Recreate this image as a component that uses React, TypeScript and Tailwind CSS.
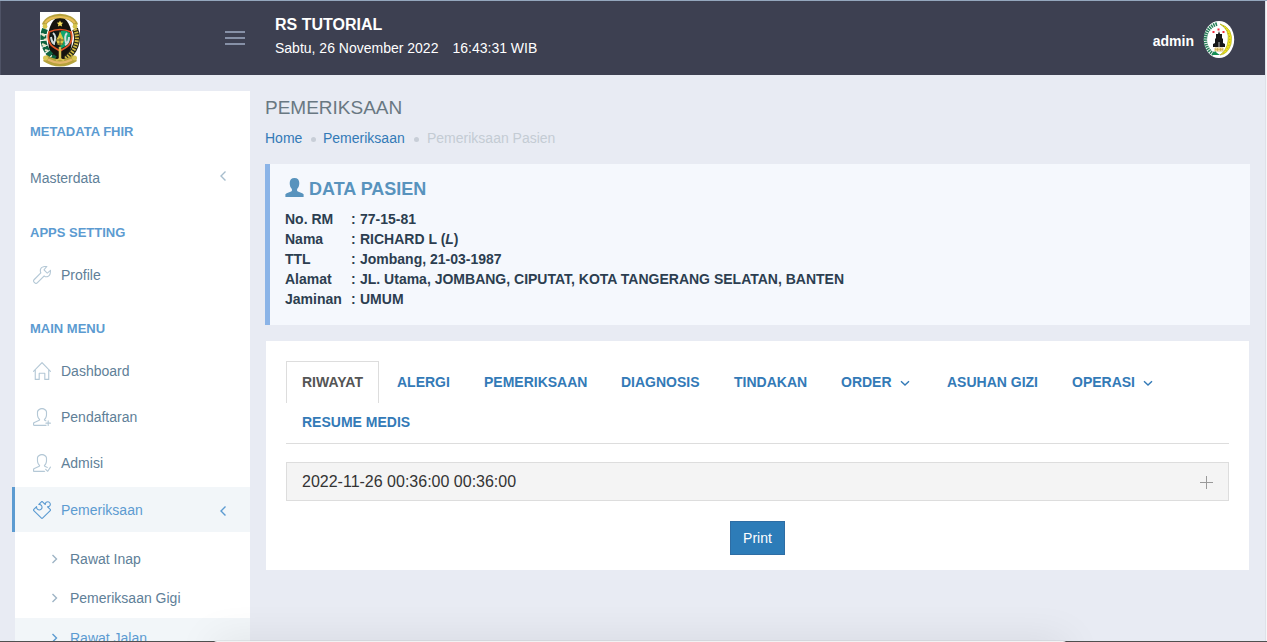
import React from "react";
import { SlHome, SlPuzzle, SlUserFollow, SlUserFollowing, SlWrench } from "react-icons/sl";

function CityCrest() {
  return (
    <svg width="40" height="55" viewBox="0 0 40 55" className="block bg-white">
      <ellipse cx="20" cy="27" rx="12" ry="22" fill="#15130f" />
      <path d="M4 13C9 1 31 1 36 13" fill="none" stroke="#b5a23e" strokeWidth="4.5" />
      <path d="M5 11C11 3 29 3 35 11" fill="none" stroke="#e7bd55" strokeWidth="2" />
      <circle cx="5" cy="14.500" r="2.400" fill="#d6c54c" />
      <circle cx="35" cy="14.500" r="2.400" fill="#d6c54c" />
      <path d="M5 17C1 27 4 39 15 47" fill="none" stroke="#0d6340" strokeWidth="6" strokeDasharray="5 1" />
      <path d="M2 22l3 2M2 32l4 2M5 38l3 1M4 28l3-1" stroke="#e8e7c9" strokeWidth="2.300" />
      <path d="M35 17C40 28 35 40 25 47" fill="none" stroke="#242516" strokeWidth="6" />
      <path d="M35 17C40 28 35 40 25 47" fill="none" stroke="#d3bd45" strokeWidth="4" strokeDasharray="1.7 1.2" />
      <path d="m20 8.500 1 2 2.200.2-1.600 1.500.5 2.300-2.100-1.100-2.100 1.100.5-2.300-1.600-1.500 2.200-.2z" fill="#f7e05f" />
      <path d="M9 20Q20 15 31 20Q34 31 25 36L20 39L15 36Q6 31 9 20Z" fill="#111816" stroke="#e25527" strokeWidth="1.700" />
      <path d="M21 19Q26 18 30 21Q32 31 24 35L20 37Z" fill="#10a46d" />
      <path d="M13 21Q17 24 14 31M11 25Q12 32 15 32M27 21Q24 24 26 31M29 25Q29 31 25 33" stroke="#d2dddd" strokeWidth="2" fill="none" />
      <path d="M20 19Q22 24 24 28L22 33H18L16 28Q19 24 20 19Z" fill="#dcc344" />
      <path d="M16 28h8M16.500 32h7M20 26v9" stroke="#625b27" />
      <path d="M20 35v14" stroke="#d8c354" strokeWidth="2.500" />
      <path d="M5 46Q20 56 35 46" fill="none" stroke="#b6a23b" strokeWidth="7" />
      <path d="M8 47.500Q20 54 32 47.500" fill="none" stroke="#e5b86a" strokeWidth="2.500" />
      <circle cx="5.500" cy="46" r="2.500" fill="#d8c656" />
      <circle cx="34.500" cy="46" r="2.500" fill="#d8c656" />
      <path d="M16 48.500l4-2 4 2" fill="none" stroke="#d8c354" strokeWidth="1.500" />
    </svg>
  );
}

function ClubBadge() {
  return (
    <svg width="32" height="39" viewBox="0 0 32 39">
      <ellipse cx="16" cy="19.500" rx="15.200" ry="18.600" fill="white" />
      <path d="M14 4C-1 8-1 29 11 34" fill="none" stroke="#27805a" strokeWidth="3.600" strokeDasharray="1.500 .8" />
      <path d="M17 4Q31 8 28 24Q25 34 17 35Q24 30 25 21Q27 10 17 4Z" fill="#f5e51f" stroke="#aeb21a" strokeWidth=".7" />
      <path d="M20 6Q29 13 26 25Q24 31 19 34" fill="none" stroke="#8f9321" strokeWidth=".9" strokeDasharray="1 2" />
      <path d="M16 11l1 3h2v4l1 1v4l2 1v3H10v-3l2-1v-4l1-1v-4h2z" fill="#171719" />
      <path d="M15 22h2v5h-2z" fill="#656568" />
      <path d="M10.500 11v2M15.500 8.500v2M20.500 11v2" stroke="#f12d3d" strokeWidth="2" />
      <path d="M12 28h8v3h-8zM12 29.500h8M14.500 28v3M17.500 28v3" fill="#fff4ce" stroke="#cba842" strokeWidth=".7" />
      <path d="M9 35l3-4 2 2 3 2z" fill="#139154" />
    </svg>
  );
}

function Chevron({ d, className = "" }: { d: "left" | "right" | "down"; className?: string }) {
  const paths = { left: "M7.500 1.500 3 6l4.500 4.500", right: "M3.500 2 7.500 6 3.500 10", down: "M2 4.200 6 8l4-3.800" };
  return (
    <svg width="12" height="12" viewBox="0 0 12 12" fill="none" stroke="currentColor" strokeWidth="1.400" className={className}>
      <path d={paths[d]} />
    </svg>
  );
}

function Heading({ children, className }: { children: React.ReactNode; className: string }) {
  return <h3 className={"pl-[15px] text-[13px] leading-4 font-bold text-[#5c9bd1] " + className}>{children}</h3>;
}

function MenuRow({ icon: Icon, label }: { icon: React.ComponentType<{ size?: number; className?: string }>; label: string }) {
  return (
    <a className="flex h-[46px] items-center pl-[18px] text-sm text-[#608098]">
      <Icon size={18} className="mr-[10px] text-[#b4c8d6]" />
      <span>{label}</span>
    </a>
  );
}

const patient: [string, React.ReactNode][] = [
  ["No. RM", "77-15-81"],
  ["Nama", <>RICHARD L (<i>L</i>)</>],
  ["TTL", "Jombang, 21-03-1987"],
  ["Alamat", "JL. Utama, JOMBANG, CIPUTAT, KOTA TANGERANG SELATAN, BANTEN"],
  ["Jaminan", "UMUM"],
];

const tabs: { name: string; width: string; menu?: boolean }[] = [
  { name: "ALERGI", width: "w-[87px]" },
  { name: "PEMERIKSAAN", width: "w-[137px]" },
  { name: "DIAGNOSIS", width: "w-[113px]" },
  { name: "TINDAKAN", width: "w-[107px]" },
  { name: "ORDER", width: "w-[106px]", menu: true },
  { name: "ASUHAN GIZI", width: "w-[125px]" },
  { name: "OPERASI", width: "w-[100px]", menu: true },
];

export default function App() {
  return (
    <div className="relative flex h-[642px] w-[1267px] flex-col overflow-hidden bg-[#e8ebf3] font-['Liberation_Sans',Arial,sans-serif] whitespace-nowrap">
      <header className="flex h-[75px] w-[1265px] shrink-0 border-t border-l border-t-[#94a7bd] border-l-[#4f5366] bg-[#3d4051]">
        <div className="flex w-[274px] justify-between pt-[11px] pr-[30px] pl-[39px]">
          <CityCrest />
          <svg width="20" height="14" viewBox="0 0 20 14" className="mt-[19px]">
            <path d="M0 1h20M0 7h20M0 13h20" stroke="#8791a7" strokeWidth="2" />
          </svg>
        </div>
        <div className="pt-3 text-white">
          <div className="text-base leading-6 font-bold">RS TUTORIAL</div>
          <div className="flex gap-[14px] text-sm leading-[22px]">
            <span>Sabtu, 26 November 2022</span>
            <span>16:43:31 WIB</span>
          </div>
        </div>
        <div className="ml-auto flex h-[75px] items-center gap-[9px] pr-[30px] pt-px text-sm font-bold text-white">
          <span className="pt-[3px]">admin</span>
          <ClubBadge />
        </div>
      </header>

      <div className="flex min-h-0 flex-1 gap-[15px] pt-4 pl-[15px]">
        <aside className="w-[235px] shrink-0 bg-white">
          <Heading className="h-16 pt-[33px]">METADATA FHIR</Heading>
          <a className="flex h-[46px] items-center justify-between pr-5 pl-[15px] text-sm text-[#608098]">
            Masterdata
            <Chevron d="left" className="-mt-1 text-[#a7bdcd]" />
          </a>
          <Heading className="h-[51px] pt-6">APPS SETTING</Heading>
          <MenuRow icon={SlWrench} label="Profile" />
          <Heading className="h-[50px] pt-[23px]">MAIN MENU</Heading>
          <MenuRow icon={SlHome} label="Dashboard" />
          <MenuRow icon={SlUserFollow} label="Pendaftaran" />
          <MenuRow icon={SlUserFollowing} label="Admisi" />
          <a className="mt-px -ml-[3px] flex h-[45px] items-center border-l-[3px] border-[#5c9bd1] bg-[#f2f6f9] pr-5 pl-[18px] text-sm text-[#5c9bd1]">
            <SlPuzzle size={18} className="mr-[10px]" />
            Pemeriksaan
            <Chevron d="left" className="mt-0.5 ml-auto" />
          </a>
          <div className="pt-[7px] text-sm text-[#608098]">
            {["Rawat Inap", "Pemeriksaan Gigi", "Rawat Jalan"].map((name) => (
              <a key={name} className={"flex h-[39px] items-center gap-[9px] pl-[34px] " + (name === "Rawat Jalan" ? "mt-px h-[36px] bg-[#f2f6f9] text-[#5c9bd1]" : "")}>
                <Chevron d="right" className={name === "Rawat Jalan" ? "" : "text-[#9eb4c5]"} />
                {name}
              </a>
            ))}
          </div>
        </aside>

        <main className="w-[985px]">
          <h1 className="h-9 pt-[5px] text-[19px] leading-6 text-[#697882]">PEMERIKSAAN</h1>
          <nav className="flex h-[22px] items-center text-sm text-[#337ab7]">
            <a className="w-[46px]">Home</a>
            <span className="mr-[7px] mt-[3px] size-[5px] rounded-full bg-[#c8ced7]" />
            <a className="w-[91px]">Pemeriksaan</a>
            <span className="mr-[8px] mt-[3px] size-[5px] rounded-full bg-[#c8ced7]" />
            <span className="text-[#c4ccd4]">Pemeriksaan Pasien</span>
          </nav>

          <section className="mt-[15px] h-[161px] border-l-[5px] border-[#8bb4e7] bg-[#f5f8fd] pt-[13px] pl-[15px]">
            <h2 className="flex h-6 text-[18px] leading-6 font-bold text-[#5893bd]">
              <svg width="19" height="20" viewBox="0 0 19 20" className="mr-[5px] shrink-0" fill="currentColor">
                <path d="M9.500 1C6.400 1 4.700 2.900 4.700 6.100c0 2.500.7 4.600 2.200 6v2C5.700 15 1.500 16 .4 17.300V20h18.200v-2.700c-1.100-1.300-5.300-2.300-6.500-3.200v-2c1.500-1.400 2.200-3.500 2.200-6C14.300 2.900 12.600 1 9.500 1Z" />
              </svg>
              DATA PASIEN
            </h2>
            <dl className="grid grid-cols-[66px_9px_auto] pt-2 text-sm leading-5 font-bold text-[#2c3e50]">
              {patient.map(([name, value]) => (
                <React.Fragment key={name}>
                  <dt>{name}</dt>
                  <span>:</span>
                  <dd>{value}</dd>
                </React.Fragment>
              ))}
            </dl>
          </section>

          <section className="mt-4 mr-px ml-px h-[229px] bg-white px-5 pt-5">
            <div className="h-[83px] border-b border-[#dddddd]">
              <div className="flex text-sm leading-5 font-bold text-[#337ab7]">
                <a className="mr-[18px] h-[42px] w-[93px] border border-b-0 border-[#dddddd] pt-[10px] pl-[15px] text-[#555555]">RIWAYAT</a>
                {tabs.map((tab) => (
                  <a key={tab.name} className={"flex h-[42px] items-center " + tab.width}>
                    {tab.name}
                    {tab.menu && <Chevron d="down" className="ml-[7px] mt-px" />}
                  </a>
                ))}
              </div>
              <a className="block pl-4 pt-[9px] text-sm leading-5 font-bold text-[#337ab7]">RESUME MEDIS</a>
            </div>
            <div className="mt-[18px] flex h-[39px] items-center justify-between border border-[#dddddd] bg-[#f4f4f4] pr-[15px] pl-[15px] text-base text-[#333333]">
              <span>2022-11-26 00:36:00 00:36:00</span>
              <svg width="13" height="13" viewBox="0 0 13 13" className="mt-px">
                <path d="M0 6.500h13M6.500 0v13" stroke="#999999" />
              </svg>
            </div>
            <div className="flex justify-center pt-5">
              <button className="h-[34px] w-[55px] border border-[#2e6da4] bg-[#2d7cb8] text-sm text-white">Print</button>
            </div>
          </section>
        </main>
      </div>

      <div className="absolute top-0 right-0 h-full w-[2px] border-l border-[#dfe2e9] bg-[#f5f6f8]" />
      <div className="absolute top-0 right-0 h-px w-full bg-[#94a7bd]" />
      <div className="absolute top-[641px] left-0 h-px w-full bg-[#505050]" />
      <div className="absolute top-[641px] left-[213px] h-3 w-[854px] rounded-[4px] bg-[#f2f2f3] shadow-[0_5px_40px_rgba(0,0,0,0.19),0_0_1px_rgba(0,0,0,0.5)]" />
    </div>
  );
}
